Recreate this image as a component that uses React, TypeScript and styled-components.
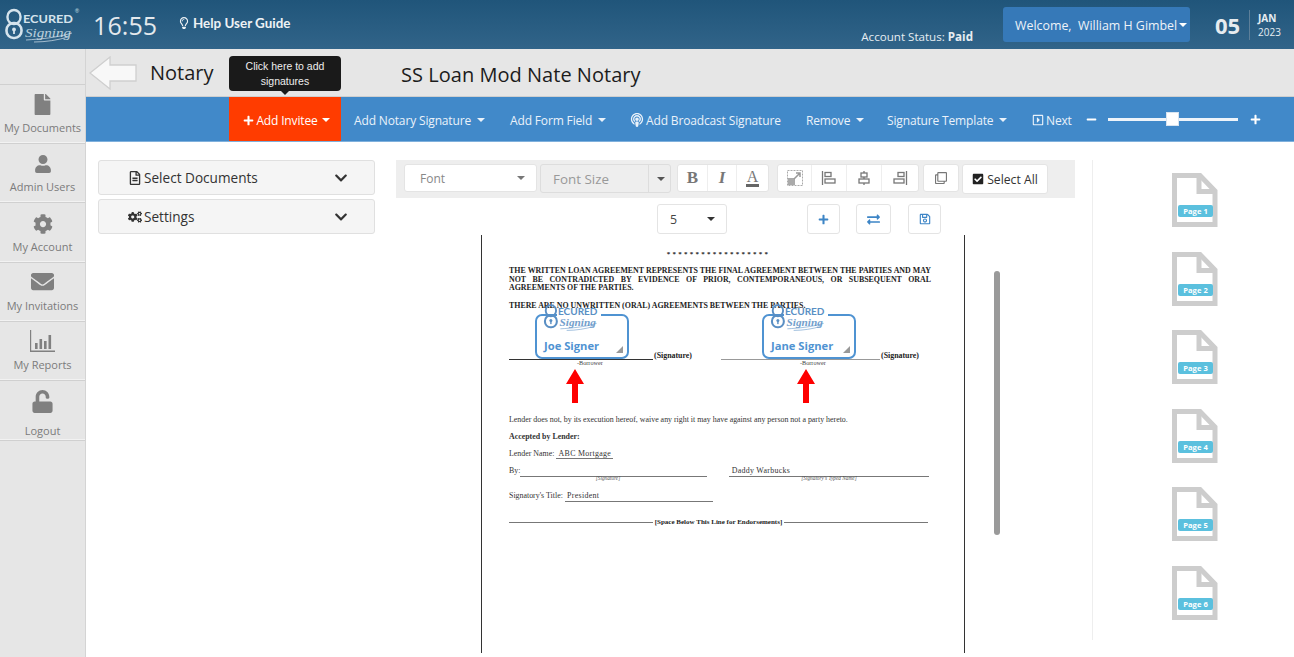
import React from "react";
import styled, { createGlobalStyle } from "styled-components";
import {
  FaFile, FaUser, FaCog, FaEnvelope, FaUnlock, FaPlus, FaMinus, FaExchangeAlt, FaRegSave, FaCheckSquare,
  FaRegClone, FaChevronDown, FaCogs, FaRegFileAlt, FaPodcast, FaRegLightbulb, FaRegCaretSquareRight,
} from "react-icons/fa";

const Global = createGlobalStyle`
  html, body { margin: 0; padding: 0; height: 100%; overflow: hidden; background: #fff; }
  body { font-family: "Open Sans", "Noto Sans", sans-serif; }
  * { box-sizing: border-box; }
  svg { flex: none; }
`;

const Page = styled.div`width: 1294px; height: 657px; display: flex; flex-direction: column; overflow: hidden;`;
const Header = styled.header`
  height: 49px; flex: none; display: flex; align-items: center; color: #e6edf2; padding-left: 4px;
  background: linear-gradient(180deg, #20557a 0%, #316489 100%);
`;
const LogoWrap = styled.div`width: 76px; height: 40px; flex: none; display: flex;`;
const Clock = styled.div`font-size: 25px; margin-left: 13px; width: 65px; letter-spacing: .1px; color: #e4e9ed;`;
const Help = styled.div`margin-left: 20px; display: flex; align-items: center; gap: 3px; font: 700 13.4px Lato, sans-serif; color: #eef2f5; width: 120px; padding-bottom: 3px;`;
const Status = styled.div`margin-left: auto; align-self: flex-end; font-size: 11.6px; padding-bottom: 5px; color: #e6edf2; b { font-weight: 700; }`;
const Welcome = styled.div`
  margin-left: 30px; width: 187px; height: 35px; background: #3679b8; border-radius: 3px; display: flex; align-items: center;
  padding: 1px 0 0 12px; font-size: 12.4px; color: #eef3f8; white-space: pre;
`;
const Caret = styled.span<{ $c?: string }>`
  display: inline-block; width: 0; height: 0; margin-left: 2px; vertical-align: middle;
  border-left: 4px solid transparent; border-right: 4px solid transparent; border-top: 4px solid ${p => p.$c || "#fff"};
`;
const DayNum = styled.div`margin-left: 25px; font-size: 22px; font-weight: 700; width: 34px; color: #e6ebef;`;
const DateBox = styled.div`border-left: 1px solid #5d7f99; height: 30px; padding: 1px 0 0 8px; margin-right: 9px; width: 36px; display: flex; flex-direction: column; justify-content: center; font-size: 10px; line-height: 14px; span:first-child { font-weight: 700; }`;

const Body = styled.div`flex: 1; display: flex; min-height: 0;`;
const Sidebar = styled.nav`width: 86px; flex: none; background: #e6e6e6; border-right: 1px solid #d4d4d4; padding-top: 35px;`;
const NavItem = styled.div<{ $h: number; $pb: number; $gap: number }>`
  height: ${p => p.$h}px; border-top: 1px solid #d0d0d0; border-bottom: 1px solid #f2f2f2; display: flex; flex-direction: column; align-items: center; justify-content: flex-end;
  color: #7b7b7b; font-size: 11px; padding-bottom: ${p => p.$pb}px; gap: ${p => p.$gap}px;
  svg { color: #808080; }
`;
const NavEnd = styled.div`border-top: 1px solid #d0d0d0;`;

const Main = styled.main`flex: 1; min-width: 0; display: flex; flex-direction: column;`;
const TitleBar = styled.div`height: 48px; flex: none; background: #e6e6e6; border-bottom: 1px solid #cfcfcf; display: flex; align-items: center; padding-left: 3px; color: #1c1c1c; font-size: 20px;`;
const Notary = styled.div`margin-left: 13px; width: 251px;`;
const DocTitle = styled.div`padding-top: 3px; letter-spacing: .03px;`;
const ActionBar = styled.div`height: 45px; flex: none; background: #4189c9; display: flex; align-items: center; padding-left: 143px; color: #eaf2fa; font-size: 12px; letter-spacing: -.15px; border-bottom: 1px solid #7fb0dc;`;
const InviteBtn = styled.div`
  position: relative; width: 112px; height: 44px; background: #ff3c00; color: #fff; display: flex; align-items: center; justify-content: center; gap: 2px; margin-right: 13px; padding: 2px 0 0 3px;
`;
const Tip = styled.div`
  position: absolute; left: 0; top: -41px; width: 112px; height: 35px; background: #1a1a1a; color: #eee; border-radius: 4px; letter-spacing: 0;
  font: 10.5px/15px "Liberation Sans", Arial, sans-serif; text-align: center; padding-top: 3px;
  &::after { content: ""; position: absolute; left: 52px; bottom: -4px; border-left: 4px solid transparent; border-right: 4px solid transparent; border-top: 4px solid #1a1a1a; }
`;
const Action = styled.div<{ $w: number; $gap?: number }>`width: ${p => p.$w}px; margin-right: ${p => p.$gap ?? 26}px; padding-top: 2px; display: flex; align-items: center; gap: 2px; white-space: nowrap; flex: none;`;
const ActCaret = styled(Caret)`margin-left: 4px; border-top-color: #eaf2fa;`;
const Zoom = styled.div`display: flex; align-items: center; padding-top: 1px; color: #fff;`;
const Track = styled.div`position: relative; width: 130px; height: 3px; background: #eef4fa; margin: 0 12px 0 11px;`;
const Thumb = styled.div`position: absolute; left: 58px; top: -6px; width: 13px; height: 14px; background: #fff; border: 1px solid #d8e4f0;`;

const Content = styled.div`flex: 1; min-height: 0; display: flex; padding: 18px 0 0 12px;`;
const Left = styled.div`width: 277px; flex: none; display: flex; flex-direction: column; gap: 4px;`;
const Accordion = styled.div`
  height: 35px; background: #f5f5f5; border: 1px solid #e0e0e0; border-radius: 3px; display: flex; align-items: center; padding: 0 26px 0 29px;
  font-size: 13.6px; color: #333; gap: 2px; font-weight: 500;
  > svg:last-child { margin-left: auto; color: #333; }
`;
const Editor = styled.div`width: 679px; margin-left: 21px; flex: none; display: flex; flex-direction: column;`;
const Toolbar = styled.div`height: 38px; background: #eeeeee; display: flex; align-items: flex-start; padding: 4px 0 0 8px; flex: none;`;
const Select = styled.div<{ $w: number; $ml?: number }>`
  width: ${p => p.$w}px; height: 28px; margin-left: ${p => p.$ml ?? 0}px; background: #fff; border: 1px solid #e4e4e4; border-radius: 3px; display: flex; align-items: center; justify-content: space-between;
  padding: 0 11px 0 15px; font-size: 12px; color: #888;
`;
const SizeSelect = styled.div`width: 131px; height: 29px; margin-left: 3px; background: #eee; border: 1px solid #ddd; border-radius: 3px; display: flex; align-items: center; color: #999; font-size: 13.4px;`;
const SizeLabel = styled.div`flex: 1; padding-left: 12px; height: 100%; display: flex; align-items: center; border-right: 1px solid #ddd;`;
const SizeArrow = styled.div`width: 21px; display: flex; justify-content: center;`;
const Group = styled.div<{ $ml: number }>`display: flex; margin-left: ${p => p.$ml}px; background: #fff; border: 1px solid #e4e4e4; border-radius: 3px; height: 28px;`;
const ToolBtn = styled.div<{ $w: number; $font?: string }>`
  width: ${p => p.$w}px; display: flex; align-items: center; justify-content: center; color: #777; border-right: 1px solid #eee;
  font: ${p => p.$font || "700 17px 'Liberation Serif', serif"};
  &:last-child { border-right: 0; }
`;
const UnderA = styled.span`display: flex; flex-direction: column; align-items: center; line-height: 14px; font-size: 16px; font-weight: 400; &::after { content: ""; width: 13px; height: 3px; background: #666; }`;
const SelectAll = styled.div`width: 86px; height: 30px; margin-left: 3px; background: #fff; border: 1px solid #e4e4e4; border-radius: 3px; display: flex; align-items: center; justify-content: center; gap: 3px; font-size: 12.2px; color: #333;`;
const Row2 = styled.div`height: 37px; flex: none; display: flex; align-items: flex-start; padding: 6px 0 0 261px;`;
const NumSelect = styled.div`width: 70px; height: 30px; background: #fff; border: 1px solid #e4e4e4; border-radius: 3px; display: flex; align-items: center; justify-content: space-between; padding: 0 11px 0 12px; font-size: 12.4px; color: #444;`;
const SquareBtn = styled.div<{ $w: number; $ml: number }>`width: ${p => p.$w}px; height: 30px; margin-left: ${p => p.$ml}px; background: #fff; border: 1px solid #e4e4e4; border-radius: 3px; display: flex; align-items: center; justify-content: center; color: #3d85c6;`;

const DocRow = styled.div`display: flex; padding-left: 85px; flex: none;`;
const Doc = styled.div`
  position: relative; width: 484px; height: 418px; border-left: 1.5px solid #333; border-right: 1.5px solid #333; padding: 15px 33px 0 27px; color: #1d1d1d;
  font: 7.9px/8.6px "Liberation Serif", "Times New Roman", serif; overflow: hidden;
`;
const Stars = styled.div`text-align: center; font-weight: 700; font-size: 7px; letter-spacing: 2.25px; line-height: 9px; padding-right: 3px;`;
const Bold = styled.p<{ $mt: number }>`margin: ${p => p.$mt}px 0 0; font-weight: 700; white-space: nowrap;`;
const JLine = styled.span`display: block; text-align: justify; text-align-last: justify; white-space: normal;`;
const SigRow = styled.div`display: flex; height: 10px; margin-top: 42px; align-items: flex-start;`;
const SigLine = styled.div<{ $w: number; $c?: string }>`width: ${p => p.$w}px; height: 1px; margin-top: 7px; background: ${p => p.$c || "#333"}; flex: none;`;
const SigLabel = styled.div`font-weight: 700; padding-left: 1px; width: 68px; flex: none;`;
const BorrowRow = styled.div`display: flex; font-size: 6.2px; line-height: 8px; height: 8px; color: #444; margin-top: -3px;`;
const Borrow = styled.div<{ $w: number }>`width: ${p => p.$w}px; flex: none;`;
const Para = styled.div<{ $mt: number; $b?: boolean }>`margin-top: ${p => p.$mt}px; font-weight: ${p => p.$b ? 700 : 400}; white-space: nowrap; color: #333;`;
const Flex = styled.div<{ $mt: number }>`display: flex; align-items: flex-start; height: 9px; margin-top: ${p => p.$mt}px; color: #333;`;
const Under = styled.span<{ $w?: number; $ml?: number }>`display: inline-block; ${p => p.$w ? `width: ${p.$w}px;` : ""} margin-left: ${p => p.$ml ?? 0}px; border-bottom: 1px solid #777; height: 9.5px; flex: none; white-space: nowrap; letter-spacing: .3px;`;
const Caption = styled.div`display: flex; height: 7px; margin-top: -1px; font-size: 5.3px; line-height: 7px; font-style: italic; color: #555; text-align: center;`;
const Cap = styled.div<{ $w: number; $ml?: number }>`width: ${p => p.$w}px; margin-left: ${p => p.$ml ?? 0}px; flex: none;`;
const Endorse = styled.div`margin-top: 17px; display: flex; align-items: center; font-weight: 700; font-size: 7px; gap: 2px; width: 419px; &::before, &::after { content: ""; flex: 1; height: 1px; background: #777; }`;

const SigBox = styled.div<{ $x: number }>`
  position: absolute; left: ${p => p.$x}px; top: 79px; width: 94px; height: 45px; border: 2px solid #4f93d2; border-radius: 7px;
  font: 700 11.2px "Open Sans", sans-serif; color: #4f93d2; display: flex; align-items: flex-end; padding: 0 0 4px 7px;
  &::after { content: ""; position: absolute; right: 4px; bottom: 4px; border-left: 7px solid transparent; border-bottom: 7px solid #999; }
`;
const SigLogo = styled.div`
  position: absolute; left: 6px; top: -15px; width: 60px; height: 32px; display: flex;
  background: linear-gradient(#fff, #fff) no-repeat 14px 12px / 44px 5px;
`;
const RedArrow = styled.div<{ $x: number }>`position: absolute; left: ${p => p.$x}px; top: 134px; display: flex;`;
const Scrollbar = styled.div`width: 6px; height: 264px; background: #9a9a9a; border-radius: 3px; margin: 36px 0 0 29px; flex: none;`;

const Thumbs = styled.div`width: 125px; height: 480px; margin-left: 17px; flex: none; border-left: 1px solid #eee; padding: 13px 0 0 79px; display: flex; flex-direction: column; gap: 24.6px;`;
const PageThumb = styled.div`position: relative; width: 46px; height: 54px; display: flex;`;
const PageBadge = styled.div`position: absolute; left: 6px; top: 32px; width: 35px; height: 12px; border-radius: 2px; background: #5bc0de; color: #fff; font: 700 7.6px/12px "Open Sans", sans-serif; text-align: center;`;

const Logo: React.FC<{ c: string; reg?: boolean }> = ({ c, reg }) => (
  <svg viewBox="0 0 76 40" width="100%" height="100%">
    <rect x="3.500" y="5" width="13" height="14" rx="6.500" fill="none" stroke={c} strokeWidth="2.400" />
    <rect x="2.500" y="18" width="15" height="15" rx="7" fill="none" stroke={c} strokeWidth="2.600" />
    <circle cx="10" cy="24.500" r="1.900" fill={c} /><rect x="9.100" y="25" width="1.800" height="4" fill={c} />
    <text x="19" y="18" fontFamily="Lato, sans-serif" fontWeight="700" fontSize="11.500" fill={c} textLength="50" lengthAdjust="spacingAndGlyphs">ECURED</text>
    <text x="21" y="32" fontFamily="'Liberation Serif', serif" fontStyle="italic" fontSize="13.500" fill={c} textLength="46" lengthAdjust="spacingAndGlyphs" opacity=".85">Signing</text>
    <path d="M22 35c14-1 30-2 46-7M30 37c12 0 24-2 34-5" fill="none" stroke={c} strokeWidth=".7" />
    {reg && <text x="71" y="7.500" fontFamily="'Liberation Sans', sans-serif" fontSize="5.500" fill={c}>®</text>}
  </svg>
);

const BackArrow = () => (
  <svg width="48" height="34" viewBox="0 0 48 34">
    <path d="M1 17 21 1v8h26v16H21v8z" fill="#f8f8f8" stroke="#cfcfcf" strokeWidth="1.300" />
  </svg>
);
const Bars = () => (
  <svg width="25" height="22" viewBox="0 0 25 22" fill="#808080">
    <path d="M0 0h1.200v20.500H25V22H0z" /><rect x="5" y="13" width="2.600" height="6" /><rect x="9.500" y="9" width="2.600" height="10" /><rect x="14" y="11" width="2.600" height="8" /><rect x="18.500" y="5" width="2.600" height="14" />
  </svg>
);
const Stretch = () => (
  <svg width="16" height="16" viewBox="0 0 16 16">
    <rect x=".5" y=".5" width="15" height="15" fill="none" stroke="#aaa" strokeDasharray="2 1" />
    <rect x="1" y="8" width="7" height="7" fill="#aaa" /><path d="M7 9l6-6M9 3h4v4" stroke="#999" fill="none" strokeWidth="1.500" />
  </svg>
);
const Align: React.FC<{ kind: "l" | "c" | "r" }> = ({ kind }) => (
  <svg width="16" height="16" viewBox="0 0 16 16" fill="none" stroke="#777" strokeWidth="1.300">
    {kind === "l" && <><path d="M1.500 1v14" /><rect x="4" y="2.500" width="6" height="4" /><rect x="4" y="9" width="10" height="4" /></>}
    {kind === "c" && <><path d="M8 1v2M8 7v2M8 13v2" /><rect x="5" y="3" width="6" height="4" /><rect x="3" y="9" width="10" height="4" /></>}
    {kind === "r" && <><path d="M14.500 1v14" /><rect x="6" y="2.500" width="6" height="4" /><rect x="2" y="9" width="10" height="4" /></>}
  </svg>
);
const UpArrow = () => (
  <svg width="18" height="34" viewBox="0 0 18 34"><path d="M9 0 18 15H12V34H6V15H0z" fill="#fe0000" /></svg>
);
const FileThumb = () => (
  <svg width="46" height="54" viewBox="0 0 46 54" fill="none" stroke="#cdcdcd" strokeWidth="5">
    <path d="M2.500 2.500H28L43 18V51.500H2.500z" /><path d="M27 3V18.500H43" />
  </svg>
);

const nav = [
  { label: "My Documents", h: 59, pb: 7, gap: 5, icon: <FaFile size={21} /> },
  { label: "Admin Users", h: 59, pb: 7, gap: 6, icon: <FaUser size={18} /> },
  { label: "My Account", h: 60, pb: 7, gap: 5, icon: <FaCog size={20} /> },
  { label: "My Invitations", h: 59, pb: 7, gap: 5, icon: <FaEnvelope size={23} /> },
  { label: "My Reports", h: 59, pb: 7, gap: 5, icon: <Bars /> },
  { label: "Logout", h: 60, pb: 1, gap: 10, icon: <FaUnlock size={23} /> },
];

export default function App() {
  return (
    <Page>
      <Global />
      <Header>
        <LogoWrap><Logo c="#d5e3ec" reg /></LogoWrap>
        <Clock>16:55</Clock>
        <Help><FaRegLightbulb size={12} /> Help User Guide</Help>
        <Status>Account Status: <b>Paid</b></Status>
        <Welcome>Welcome,  William H Gimbel<Caret /></Welcome>
        <DayNum>05</DayNum>
        <DateBox><span>JAN</span><span>2023</span></DateBox>
      </Header>
      <Body>
        <Sidebar>
          {nav.map(n => (
            <NavItem key={n.label} $h={n.h} $pb={n.pb} $gap={n.gap}>{n.icon}<span>{n.label}</span></NavItem>
          ))}
          <NavEnd />
        </Sidebar>
        <Main>
          <TitleBar>
            <BackArrow />
            <Notary>Notary</Notary>
            <DocTitle>SS Loan Mod Nate Notary</DocTitle>
          </TitleBar>
          <ActionBar>
            <InviteBtn>
              <Tip>Click here to add signatures</Tip>
              <FaPlus size={11} />Add Invitee<Caret />
            </InviteBtn>
            <Action $w={130}>Add Notary Signature<ActCaret /></Action>
            <Action $w={95} $gap={25}>Add Form Field<ActCaret /></Action>
            <Action $w={150}><FaPodcast size={14} />Add Broadcast Signature</Action>
            <Action $w={55}>Remove<ActCaret /></Action>
            <Action $w={116} $gap={29}>Signature Template<ActCaret /></Action>
            <Action $w={38} $gap={16}><FaRegCaretSquareRight size={12} />Next</Action>
            <Zoom>
              <FaMinus size={11} />
              <Track><Thumb /></Track>
              <FaPlus size={11} />
            </Zoom>
          </ActionBar>
          <Content>
            <Left>
              <Accordion><FaRegFileAlt size={14} />Select Documents<FaChevronDown size={14} /></Accordion>
              <Accordion><FaCogs size={14} />Settings<FaChevronDown size={14} /></Accordion>
            </Left>
            <Editor>
              <Toolbar>
                <Select $w={133}>Font<Caret $c="#777" /></Select>
                <SizeSelect><SizeLabel>Font Size</SizeLabel><SizeArrow><Caret $c="#555" /></SizeArrow></SizeSelect>
                <Group $ml={6}>
                  <ToolBtn $w={30}>B</ToolBtn>
                  <ToolBtn $w={29} $font="italic 700 17px 'Liberation Serif', serif">I</ToolBtn>
                  <ToolBtn $w={31} $font="400 16px 'Liberation Serif', serif"><UnderA>A</UnderA></ToolBtn>
                </Group>
                <Group $ml={8}>
                  <ToolBtn $w={34}><Stretch /></ToolBtn>
                  <ToolBtn $w={35}><Align kind="l" /></ToolBtn>
                  <ToolBtn $w={35}><Align kind="c" /></ToolBtn>
                  <ToolBtn $w={36}><Align kind="r" /></ToolBtn>
                </Group>
                <Group $ml={4}><ToolBtn $w={34}><FaRegClone size={12} /></ToolBtn></Group>
                <SelectAll><FaCheckSquare size={12} color="#222" />Select All</SelectAll>
              </Toolbar>
              <Row2>
                <NumSelect>5<Caret $c="#333" /></NumSelect>
                <SquareBtn $w={33} $ml={80}><FaPlus size={11} /></SquareBtn>
                <SquareBtn $w={35} $ml={16}><FaExchangeAlt size={13} /></SquareBtn>
                <SquareBtn $w={33} $ml={17}><FaRegSave size={12} /></SquareBtn>
              </Row2>
              <DocRow>
                <Doc>
                  <Stars>******************</Stars>
                  <Bold $mt={8}>
                    <JLine>THE WRITTEN LOAN AGREEMENT REPRESENTS THE FINAL AGREEMENT BETWEEN THE PARTIES AND MAY</JLine>
                    <JLine>NOT BE CONTRADICTED BY EVIDENCE OF PRIOR, CONTEMPORANEOUS, OR SUBSEQUENT ORAL</JLine>
                    AGREEMENTS OF THE PARTIES.
                  </Bold>
                  <Bold $mt={9}>THERE ARE NO UNWRITTEN (ORAL) AGREEMENTS BETWEEN THE PARTIES.</Bold>
                  <SigRow>
                    <SigLine $w={144} />
                    <SigLabel>(Signature)</SigLabel>
                    <SigLine $w={159} $c="#999" />
                    <SigLabel>(Signature)</SigLabel>
                  </SigRow>
                  <BorrowRow>
                    <Borrow $w={68} />
                    <Borrow $w={223}>-Borrower</Borrow>
                    <Borrow $w={40}>-Borrower</Borrow>
                  </BorrowRow>
                  <Para $mt={49}>Lender does not, by its execution hereof, waive any right it may have against any person not a party hereto.</Para>
                  <Para $mt={8} $b>Accepted by Lender:</Para>
                  <Para $mt={8}>Lender Name: <Under>&nbsp;ABC Mortgage&nbsp;</Under></Para>
                  <Flex $mt={8}>
                    By:<Under $w={187} />
                    <Under $w={200} $ml={22}>&nbsp;Daddy Warbucks</Under>
                  </Flex>
                  <Caption><Cap $w={198}>[Signature]</Cap><Cap $w={200} $ml={22}>[Signatory's Typed Name]</Cap></Caption>
                  <Flex $mt={10}>
                    Signatory's Title:<Under $w={148} $ml={2}>&nbsp;President</Under>
                  </Flex>
                  <Endorse>[Space Below This Line for Endorsements]</Endorse>
                  <SigBox $x={53}>
                    <SigLogo><Logo c="#5a8fc4" /></SigLogo>Joe Signer
                  </SigBox>
                  <SigBox $x={280}>
                    <SigLogo><Logo c="#5a8fc4" /></SigLogo>Jane Signer
                  </SigBox>
                  <RedArrow $x={84}><UpArrow /></RedArrow>
                  <RedArrow $x={315}><UpArrow /></RedArrow>
                </Doc>
                <Scrollbar />
              </DocRow>
            </Editor>
            <Thumbs>
              {[1, 2, 3, 4, 5, 6].map(n => (
                <PageThumb key={n}><FileThumb /><PageBadge>Page {n}</PageBadge></PageThumb>
              ))}
            </Thumbs>
          </Content>
        </Main>
      </Body>
    </Page>
  );
}
